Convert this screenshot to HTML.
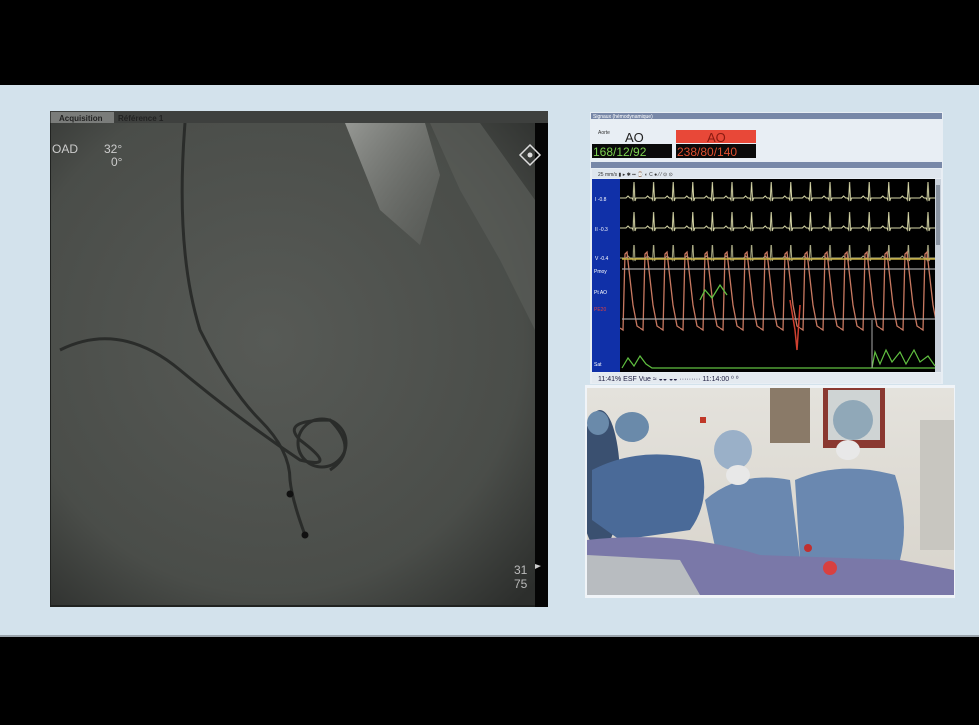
<!DOCTYPE html>
<html><head><meta charset="utf-8"><style>
html,body{margin:0;padding:0;background:#000;}
body{width:979px;height:720px;overflow:hidden;font-family:"Liberation Sans",sans-serif;}
</style></head><body>
<svg width="979" height="720" viewBox="0 0 979 720" xmlns="http://www.w3.org/2000/svg">
<defs>
<radialGradient id="xg" cx="0.45" cy="0.45" r="0.75">
<stop offset="0" stop-color="#575a56"/><stop offset="0.7" stop-color="#4a4d49"/><stop offset="1" stop-color="#2c2e2c"/>
</radialGradient>
<linearGradient id="bright" x1="0" y1="0" x2="1" y2="1">
<stop offset="0" stop-color="#9a9c98" stop-opacity="0.95"/><stop offset="1" stop-color="#6a6c68" stop-opacity="0.3"/>
</linearGradient>
<clipPath id="vc"><rect x="587" y="388" width="367" height="207"/></clipPath>
<pattern id="ecg" x="620" y="0" width="19.6" height="30" patternUnits="userSpaceOnUse">
<polyline points="0,18 6,18 8,16 10,18 12,18 13,20 14,2 15,21 16,18 19.6,18" fill="none" stroke="#d8d8a8" stroke-width="1"/>
</pattern>
<pattern id="pres" x="620" y="250" width="20" height="90" patternUnits="userSpaceOnUse">
<polyline points="0,78 3,80 5,4 7,2 9,20 13,55 17,76 20,78" fill="none" stroke="#c87860" stroke-width="1.3"/>
</pattern>
<linearGradient id="room" x1="0" y1="0" x2="0" y2="1">
<stop offset="0" stop-color="#e4e2dc"/><stop offset="1" stop-color="#d8d4cc"/>
</linearGradient>
</defs>
<rect width="979" height="720" fill="#000"/>
<rect x="0" y="85" width="979" height="551" fill="#d3e2ec"/>
<rect x="0" y="635" width="979" height="2" fill="#9aa4ac"/>

<!-- X-ray panel -->
<rect x="50" y="111" width="498" height="496" fill="#202220"/>
<rect x="51" y="123" width="484" height="482" fill="url(#xg)"/>
<path d="M430,123 L480,123 L535,200 L535,330 L500,260 L460,190 Z" fill="#5a5c58" opacity="0.7"/>
<path d="M345,123 L425,123 L440,175 L420,245 L380,210 Z" fill="url(#bright)"/>
<path d="M60,350 Q120,320 180,370 Q240,420 300,460 Q340,470 300,440 Q280,420 330,420 Q360,450 330,470" fill="none" stroke="#2a2c2a" stroke-width="3"/>
<path d="M185,123 Q175,250 200,330 Q230,390 260,420 Q290,450 290,480 Q292,500 305,535" fill="none" stroke="#2a2c2a" stroke-width="3"/>
<circle cx="322" cy="443" r="24" fill="none" stroke="#2a2c2a" stroke-width="3"/>
<circle cx="290" cy="494" r="3.5" fill="#111"/>
<circle cx="305" cy="535" r="3.5" fill="#111"/>
<rect x="535" y="123" width="13" height="484" fill="#050505"/>
<rect x="50" y="111" width="498" height="12" fill="#3e403e"/>
<rect x="51" y="112" width="63" height="11" fill="#7a7c7a"/>
<text x="59" y="121" font-size="8" font-weight="bold" fill="#222">Acquisition</text>
<text x="118" y="121" font-size="8" font-weight="bold" fill="#222">Référence 1</text>
<text x="52" y="153" font-size="12" fill="#ccc">OAD</text>
<text x="104" y="153" font-size="12" fill="#ccc">32°</text>
<text x="111" y="166" font-size="12" fill="#ccc">0°</text>
<path d="M530,145 L540,155 L530,165 L520,155 Z" fill="none" stroke="#ddd" stroke-width="1.5"/>
<circle cx="530" cy="155" r="2.5" fill="#ddd"/>
<text x="514" y="574" font-size="12" fill="#bbb">31</text>
<text x="514" y="588" font-size="12" fill="#bbb">75</text>
<path d="M535,564 L541,566 L535,569 Z" fill="#ccc"/>

<!-- Monitor -->
<rect x="590" y="112" width="353" height="272" fill="#e8eef4"/>
<rect x="591" y="113" width="351" height="6" fill="#7888a8"/>
<text x="593" y="118" font-size="5" fill="#fff">Signaux (hémodynamique)</text>
<text x="598" y="134" font-size="5" fill="#333">Aorte</text>
<text x="625" y="142" font-size="13" fill="#222">AO</text>
<rect x="676" y="130" width="80" height="13" fill="#e84838"/>
<text x="707" y="142" font-size="13" fill="#8a1a10">AO</text>
<rect x="592" y="144" width="80" height="14" fill="#0a0a0a"/>
<text x="593" y="156" font-size="12" fill="#7cd050">168/12/92</text>
<rect x="676" y="144" width="80" height="14" fill="#0a0a0a"/>
<text x="677" y="156" font-size="12" fill="#e05030">238/80/140</text>
<rect x="591" y="162" width="351" height="6" fill="#7888a8"/>
<rect x="592" y="169" width="349" height="9" fill="#dfe6ee"/>
<text x="598" y="176" font-size="5" fill="#333">25 mm/s  ▮ ▸ ✱ ▪▪ ⌚ ◐ C ● ⁄ ⁄ ⊙ ⊙</text>
<rect x="592" y="179" width="28" height="193" fill="#1030a8"/>
<rect x="620" y="179" width="315" height="193" fill="#000"/>
<rect x="935" y="179" width="6" height="193" fill="#c8d0da"/>
<rect x="936" y="185" width="4" height="60" fill="#8892a0"/>
<text x="595" y="201" font-size="5" fill="#fff">I -0.8</text>
<text x="595" y="231" font-size="5" fill="#fff">II -0.3</text>
<text x="595" y="260" font-size="5" fill="#fff">V -0.4</text>
<text x="594" y="273" font-size="5" fill="#fff">Pmoy</text>
<text x="594" y="294" font-size="5" fill="#fff">Pt AO</text>
<text x="594" y="311" font-size="5" fill="#e04040">PE20</text>
<text x="594" y="366" font-size="5" fill="#fff">Sat</text>
<rect x="620" y="182" width="315" height="22" fill="url(#ecg)"/>
<rect x="620" y="212" width="315" height="22" fill="url(#ecg)"/>
<rect x="620" y="245" width="315" height="20" fill="url(#ecg)" opacity="0.8"/>
<rect x="620" y="250" width="315" height="85" fill="url(#pres)"/>
<line x1="622" y1="259" x2="935" y2="259" stroke="#c8b040" stroke-width="1.5"/>
<line x1="622" y1="269" x2="935" y2="269" stroke="#a0a0a0" stroke-width="1.3"/>
<line x1="622" y1="319" x2="935" y2="319" stroke="#a0a0a0" stroke-width="1.3"/>
<path d="M700,300 L705,290 L712,298 L720,285 L727,295" fill="none" stroke="#60c040" stroke-width="1.3"/>
<path d="M790,300 L795,330 L797,350 L800,305" fill="none" stroke="#d04030" stroke-width="1.5"/>
<path d="M622,368 L628,358 L634,366 L640,356 L646,364 L652,368 L935,368" fill="none" stroke="#60c040" stroke-width="1.2"/>
<path d="M872,368 L875,352 L880,364 L886,350 L892,362 L900,352 L906,364 L914,350 L920,362 L928,356 L935,366" fill="none" stroke="#60c040" stroke-width="1.2"/>
<line x1="872" y1="320" x2="872" y2="368" stroke="#aaa" stroke-width="1"/>
<rect x="592" y="373" width="349" height="10" fill="#e4eaf0"/>
<text x="598" y="381" font-size="7" fill="#224">11:41% ESF  Vue   ≈  ◒◒  ◒◒   ·········   11:14:00  ⁰ ⁰</text>

<!-- Video -->
<rect x="585" y="385" width="370" height="213" fill="#f0f4f8"/>
<g clip-path="url(#vc)">
<rect x="587" y="388" width="367" height="207" fill="url(#room)"/>
<rect x="770" y="388" width="40" height="55" fill="#8a7a68"/>
<rect x="823" y="388" width="62" height="60" fill="#8a3830"/>
<rect x="828" y="390" width="52" height="50" fill="#cfd4d4"/>
<rect x="700" y="417" width="6" height="6" fill="#c03828"/>
<rect x="920" y="420" width="34" height="130" fill="#c8c6c0"/>
<ellipse cx="600" cy="480" rx="20" ry="70" fill="#3a5070"/>
<path d="M592,470 Q640,445 700,460 Q712,500 690,530 L620,540 L592,520 Z" fill="#4a6a98"/>
<ellipse cx="632" cy="427" rx="17" ry="15" fill="#6a8aaa"/>
<ellipse cx="598" cy="423" rx="11" ry="12" fill="#6a8aaa"/>
<path d="M705,500 Q740,470 790,480 L800,560 L720,570 Z" fill="#6a88b0"/>
<ellipse cx="733" cy="450" rx="19" ry="20" fill="#9ab0c8"/>
<path d="M795,480 Q840,460 895,475 Q910,520 900,560 L800,560 Z" fill="#6a88b0"/>
<ellipse cx="853" cy="420" rx="20" ry="20" fill="#90a8b8"/>
<ellipse cx="848" cy="450" rx="12" ry="10" fill="#e8e8e8"/>
<ellipse cx="738" cy="475" rx="12" ry="10" fill="#e8e8e8"/>
<path d="M587,540 Q680,530 760,555 L900,560 L954,570 L954,595 L587,595 Z" fill="#7a78a8"/>
<path d="M587,555 L680,560 L700,595 L587,595 Z" fill="#b8bcc0"/>
<circle cx="808" cy="548" r="4" fill="#c03030"/>
<circle cx="830" cy="568" r="7" fill="#d84040"/>
</g>
</svg>
</body></html>
